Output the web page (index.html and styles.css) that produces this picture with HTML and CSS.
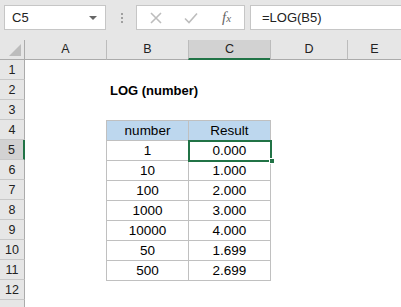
FILE: index.html
```html
<!DOCTYPE html>
<html lang="en">
<head>
    <meta charset="UTF-8">
    <title>LOG function</title>
    <link rel="stylesheet" href="styles.css">
</head>
<body>
    <div class="toolbar">
        <div class="namebox">
            <span>C5</span>
            <span class="arrow"></span>
        </div>
        <div class="dots"><i></i><i></i><i></i></div>
        <div class="fbuttons">
            <svg class="ico" width="12" height="12" viewBox="0 0 12 12"><path d="M1 1 L11 11 M11 1 L1 11" stroke="#bdbdbd" stroke-width="1.6" fill="none"/></svg>
            <svg class="ico" width="14" height="12" viewBox="0 0 14 12"><path d="M1 6.5 L5 10.5 L13 1.5" stroke="#bdbdbd" stroke-width="1.6" fill="none"/></svg>
            <span class="fx">f<small>x</small></span>
        </div>
        <div class="formula">=LOG(B5)</div>
    </div>

    <div class="sheet">
        <div class="corner"><span class="tri"></span></div>
        <div class="colhead first">A</div>
        <div class="colhead">B</div>
        <div class="colhead active">C</div>
        <div class="colhead">D</div>
        <div class="colhead">E</div>

        <div class="rowhead">1</div><div></div><div></div><div></div><div></div><div></div>
        <div class="rowhead">2</div><div></div><div class="title">LOG (number)</div><div></div><div></div><div></div>
        <div class="rowhead">3</div><div></div><div></div><div></div><div></div><div></div>
        <div class="rowhead">4</div><div></div><div class="tc th">number</div><div class="tc th right">Result</div><div></div><div></div>
        <div class="rowhead active">5</div><div></div><div class="tc">1</div><div class="tc right selected">0.000<span class="handle"></span></div><div></div><div></div>
        <div class="rowhead">6</div><div></div><div class="tc">10</div><div class="tc right">1.000</div><div></div><div></div>
        <div class="rowhead">7</div><div></div><div class="tc">100</div><div class="tc right">2.000</div><div></div><div></div>
        <div class="rowhead">8</div><div></div><div class="tc">1000</div><div class="tc right">3.000</div><div></div><div></div>
        <div class="rowhead">9</div><div></div><div class="tc">10000</div><div class="tc right">4.000</div><div></div><div></div>
        <div class="rowhead">10</div><div></div><div class="tc">50</div><div class="tc right">1.699</div><div></div><div></div>
        <div class="rowhead">11</div><div></div><div class="tc bottom">500</div><div class="tc right bottom">2.699</div><div></div><div></div>
        <div class="rowhead">12</div><div></div><div></div><div></div><div></div><div></div>
        <div class="rowhead"></div><div></div><div></div><div></div><div></div><div></div>
    </div>
</body>
</html>
```

FILE: styles.css
```css
* {
    box-sizing: border-box;
}
body {
    margin: 0;
    width: 401px;
    height: 307px;
    overflow: hidden;
    background: #fff;
    font-family: "Liberation Sans", Arial, sans-serif;
    color: #000;
}
.toolbar {
    height: 40px;
    background: #e6e6e6;
    display: flex;
    align-items: flex-start;
    padding: 5px 0 0 4px;
}
.namebox {
    width: 102px;
    height: 25px;
    background: #fff;
    border: 1px solid #c6c6c6;
    display: flex;
    align-items: center;
    justify-content: space-between;
    padding: 0 8px 0 7px;
    font-size: 13px;
    color: #222;
}
.arrow {
    width: 0;
    height: 0;
    border-left: 4px solid transparent;
    border-right: 4px solid transparent;
    border-top: 4px solid #666;
}
.dots {
    display: flex;
    flex-direction: column;
    gap: 2px;
    margin: 8px 0 0 15px;
}
.dots i {
    width: 2px;
    height: 2px;
    background: #a0a0a0;
}
.fbuttons {
    width: 109px;
    height: 25px;
    margin-left: 13px;
    background: #fff;
    border: 1px solid #c6c6c6;
    display: flex;
    align-items: center;
    padding-left: 13px;
    gap: 22px;
}
.fx {
    font-family: "Liberation Serif", serif;
    font-style: italic;
    font-size: 15px;
    color: #666;
    margin-left: 2px;
}
.fx small {
    font-size: 11px;
}
.formula {
    flex: 1;
    height: 25px;
    margin-left: 5px;
    background: #fff;
    border: 1px solid #c6c6c6;
    border-right: none;
    display: flex;
    align-items: center;
    padding-left: 11px;
    font-size: 13px;
    color: #222;
}
.sheet {
    display: grid;
    grid-template-columns: 25px 81px 82px 82px 77px 1fr;
    grid-auto-rows: 20px;
    font-size: 13.5px;
}
.corner {
    background: #e6e6e6;
    border-right: 1px solid #ababab;
    border-bottom: 1px solid #ababab;
    display: flex;
    justify-content: flex-end;
    align-items: flex-end;
    padding: 0 3px 3px 0;
}
.tri {
    width: 0;
    height: 0;
    border-left: 12px solid transparent;
    border-bottom: 12px solid #bcbcbc;
}
.colhead {
    background: #e6e6e6;
    border-left: 1px solid #bcbcbc;
    border-bottom: 1px solid #ababab;
    text-align: center;
    font-size: 12.5px;
    line-height: 19px;
    color: #222;
}
.colhead.first {
    border-left: none;
}
.colhead.active {
    background: #d2d2d2;
    border-bottom: 2px solid #217346;
}
.rowhead {
    background: #e6e6e6;
    border-right: 1px solid #ababab;
    border-bottom: 1px solid #c8c8c8;
    text-align: center;
    font-size: 12.5px;
    line-height: 20px;
    color: #222;
}
.rowhead.active {
    background: #d2d2d2;
    border-right: 2px solid #217346;
}
.title {
    font-weight: bold;
    font-size: 13px;
    white-space: nowrap;
    padding: 2px 0 0 4px;
    line-height: 18px;
}
.tc {
    border-left: 1px solid #c0c0c0;
    border-top: 1px solid #c0c0c0;
    text-align: center;
    padding-top: 1px;
    line-height: 18px;
}
.tc.th {
    background: #bdd7ee;
}
.tc.right {
    box-shadow: 1px 0 0 #c0c0c0;
}
.tc.bottom {
    box-shadow: 0 1px 0 #c0c0c0;
}
.tc.right.bottom {
    box-shadow: 1px 0 0 #c0c0c0, 0 1px 0 #c0c0c0, 1px 1px 0 #c0c0c0;
}
.selected {
    position: relative;
}
.selected::before {
    content: "";
    position: absolute;
    top: -1px;
    left: -1px;
    right: -2px;
    bottom: -2px;
    border: 2px solid #217346;
}
.handle {
    position: absolute;
    left: 80px;
    top: 17px;
    width: 6px;
    height: 6px;
    background: #217346;
    border: 1px solid #fff;
}
```
